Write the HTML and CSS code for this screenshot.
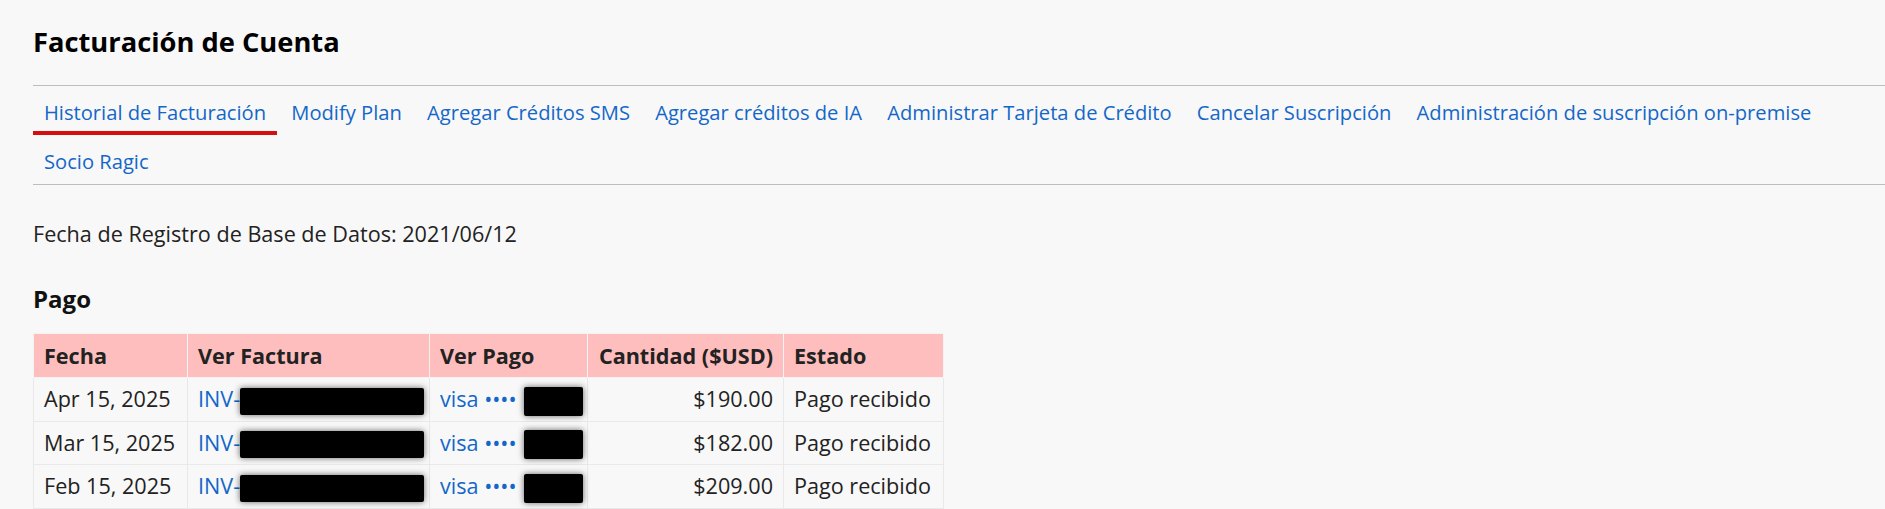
FILE: index.html
```html
<!DOCTYPE html>
<html lang="es">
<head>
  <meta charset="UTF-8">
  <title>Facturación de Cuenta</title>
  <link rel="stylesheet" href="styles.css">
</head>
<body>
  <div id="page">
    <h1>Facturación de Cuenta</h1>

    <div id="tabs">
      <a class="tab active" href="#">Historial de Facturación</a>
      <a class="tab" href="#">Modify Plan</a>
      <a class="tab" href="#">Agregar Créditos SMS</a>
      <a class="tab" href="#">Agregar créditos de IA</a>
      <a class="tab" href="#">Administrar Tarjeta de Crédito</a>
      <a class="tab" href="#">Cancelar Suscripción</a>
      <a class="tab" href="#">Administración de suscripción on-premise</a>
      <a class="tab" href="#">Socio Ragic</a>
    </div>

    <p class="reg-date">Fecha de Registro de Base de Datos: 2021/06/12</p>

    <h2>Pago</h2>

    <table id="payments">
      <colgroup>
        <col class="c-date">
        <col class="c-inv">
        <col class="c-pay">
        <col class="c-amt">
        <col class="c-state">
      </colgroup>
      <thead>
        <tr>
          <th>Fecha</th>
          <th>Ver Factura</th>
          <th>Ver Pago</th>
          <th class="num">Cantidad ($USD)</th>
          <th>Estado</th>
        </tr>
      </thead>
      <tbody>
        <tr>
          <td>Apr 15, 2025</td>
          <td><a href="#">INV-</a><span class="hidden long"></span></td>
          <td><a href="#">visa ••••</a> <span class="hidden short"></span></td>
          <td class="num">$190.00</td>
          <td>Pago recibido</td>
        </tr>
        <tr>
          <td>Mar 15, 2025</td>
          <td><a href="#">INV-</a><span class="hidden long"></span></td>
          <td><a href="#">visa ••••</a> <span class="hidden short"></span></td>
          <td class="num">$182.00</td>
          <td>Pago recibido</td>
        </tr>
        <tr>
          <td>Feb 15, 2025</td>
          <td><a href="#">INV-</a><span class="hidden long"></span></td>
          <td><a href="#">visa ••••</a> <span class="hidden short"></span></td>
          <td class="num">$209.00</td>
          <td>Pago recibido</td>
        </tr>
      </tbody>
    </table>
  </div>
</body>
</html>
```

FILE: styles.css
```css
body {
  margin: 0;
  background: #f8f8f8;
  color: #222;
  font-family: "Open Sans", Arial, sans-serif;
  font-size: 21.6px;
}

#page {
  padding: 0 0 0 33px;
}

a {
  color: #1467c8;
  text-decoration: none;
}

h1 {
  margin: 0;
  padding-top: 24px;
  font-size: 27.3px;
  font-weight: 700;
  color: #000;
  line-height: 36px;
}

/* Tabs */
#tabs {
  display: flex;
  flex-wrap: wrap;
  border-top: 1px solid #bdbdbd;
  border-bottom: 1px solid #bdbdbd;
  margin-top: 25px;
  font-size: 20.16px;
}

.tab {
  padding: 12px 11px 5px;
  line-height: 28px;
  border-bottom: 4px solid transparent;
  margin-right: 3.2px;
}

.tab.active {
  border-bottom-color: #d50f0f;
}

.reg-date {
  margin: 34px 0 0;
  line-height: 30px;
}

h2 {
  margin: 34px 0 0;
  font-size: 24px;
  font-weight: 700;
  color: #111;
  line-height: 32px;
}

/* Payments table */
#payments {
  margin-top: 18px;
  border-collapse: collapse;
  table-layout: fixed;
  width: 910px;
}

.c-date { width: 154px; }
.c-inv { width: 242px; }
.c-pay { width: 158px; }
.c-amt { width: 196px; }
.c-state { width: 160px; }

#payments th {
  background: #ffbebe;
  text-align: left;
  font-weight: 700;
  padding: 8px 10px;
  line-height: 27px;
  border: 1px solid #f3f3f3;
}

#payments td {
  padding: 8px 10px;
  line-height: 26.5px;
  border: 1px solid #e9e9e9;
  white-space: nowrap;
}

#payments .num {
  text-align: right;
}

.hidden {
  display: inline-block;
  vertical-align: middle;
  margin: -6px 0;
  background: #000;
  border-radius: 2px;
  box-shadow: 0 0 6px rgba(0, 0, 0, 0.6);
}

.hidden.long {
  width: 184px;
  height: 27px;
}

.hidden.short {
  width: 59px;
  height: 29px;
  margin-left: 2px;
}
```
